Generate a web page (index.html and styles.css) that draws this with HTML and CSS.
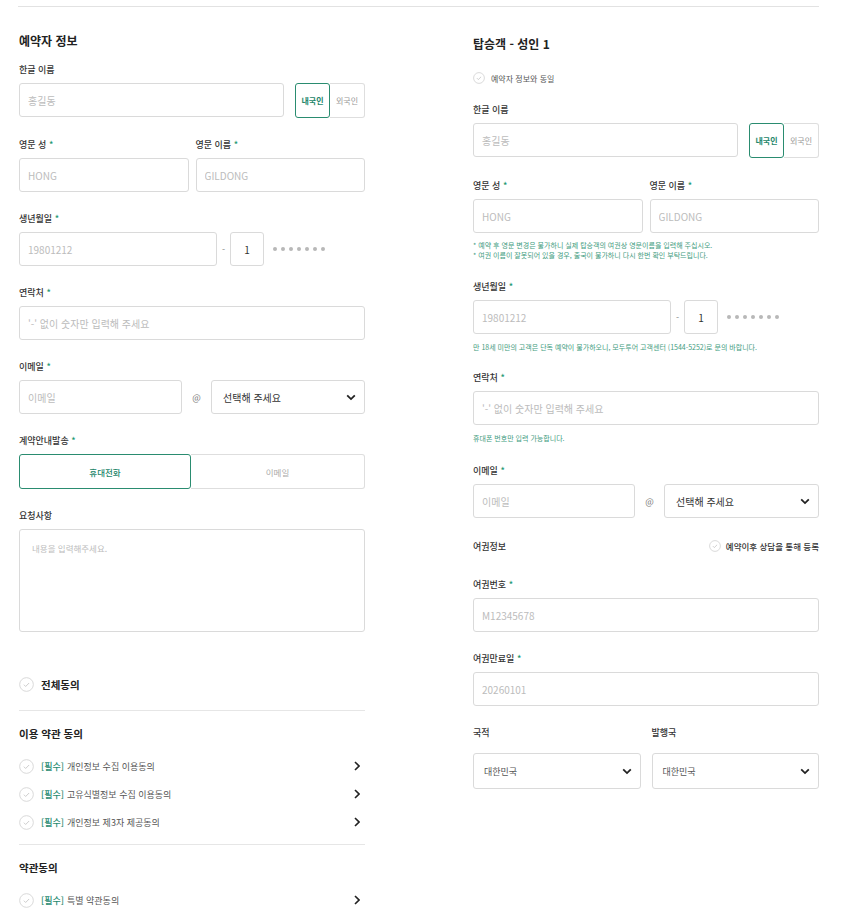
FILE: index.html
```html
<!DOCTYPE html>
<html lang="ko">
<head>
<meta charset="utf-8">
<title>예약 정보 입력</title>
<link rel="stylesheet" href="styles.css">
</head>
<body>
<div class="page">
  <section class="col col-left">
    <h2 class="sec-title">예약자 정보</h2>

    <div class="field">
      <label class="lbl">한글 이름</label>
      <div class="name-row">
        <input class="inp" placeholder="홍길동">
        <div class="nat-toggle">
          <button class="nat on">내국인</button>
          <button class="nat">외국인</button>
        </div>
      </div>
    </div>

    <div class="field two">
      <div>
        <label class="lbl">영문 성 <em>*</em></label>
        <input class="inp" placeholder="HONG">
      </div>
      <div>
        <label class="lbl">영문 이름 <em>*</em></label>
        <input class="inp" placeholder="GILDONG">
      </div>
    </div>

    <div class="field">
      <label class="lbl">생년월일 <em>*</em></label>
      <div class="birth-row">
        <input class="inp" placeholder="19801212">
        <span class="dash">-</span>
        <input class="inp inp-one" value="1">
        <span class="dots"><i></i><i></i><i></i><i></i><i></i><i></i><i></i></span>
      </div>
    </div>

    <div class="field">
      <label class="lbl">연락처 <em>*</em></label>
      <input class="inp" placeholder="'-' 없이 숫자만 입력해 주세요">
    </div>

    <div class="field">
      <label class="lbl">이메일 <em>*</em></label>
      <div class="email-row">
        <input class="inp" placeholder="이메일">
        <span class="at">@</span>
        <div class="sel"><span>선택해 주세요</span>
          <svg width="10" height="7" viewBox="0 0 10 7"><path d="M1.2 1.3L5 5.1l3.8-3.8" fill="none" stroke="#222" stroke-width="1.8"/></svg>
        </div>
      </div>
    </div>

    <div class="field">
      <label class="lbl">계약안내발송 <em>*</em></label>
      <div class="send-row">
        <button class="send on">휴대전화</button>
        <button class="send">이메일</button>
      </div>
    </div>

    <div class="field">
      <label class="lbl">요청사항</label>
      <textarea class="ta" placeholder="내용을 입력해주세요."></textarea>
    </div>

    <div class="all-agree">
      <svg class="chk" width="15" height="15" viewBox="0 0 16 16"><circle cx="8" cy="8" r="7.3" fill="#fff" stroke="#d6d6d6" stroke-width="1"/><path d="M5.2 8.2l1.9 1.9 3.7-3.7" fill="none" stroke="#c9c9c9" stroke-width="1"/></svg>
      <span>전체동의</span>
    </div>

    <div class="divider"></div>

    <h3 class="terms-title">이용 약관 동의</h3>
    <div class="term">
      <svg class="chk" width="15" height="15" viewBox="0 0 16 16"><circle cx="8" cy="8" r="7.3" fill="#fff" stroke="#d6d6d6" stroke-width="1"/><path d="M5.2 8.2l1.9 1.9 3.7-3.7" fill="none" stroke="#c9c9c9" stroke-width="1"/></svg>
      <span class="req">[필수]</span><span>개인정보 수집 이용동의</span>
      <svg class="chev" width="6" height="10" viewBox="0 0 6 10"><path d="M1 1l4 4-4 4" fill="none" stroke="#222" stroke-width="1.6"/></svg>
    </div>
    <div class="term">
      <svg class="chk" width="15" height="15" viewBox="0 0 16 16"><circle cx="8" cy="8" r="7.3" fill="#fff" stroke="#d6d6d6" stroke-width="1"/><path d="M5.2 8.2l1.9 1.9 3.7-3.7" fill="none" stroke="#c9c9c9" stroke-width="1"/></svg>
      <span class="req">[필수]</span><span>고유식별정보 수집 이용동의</span>
      <svg class="chev" width="6" height="10" viewBox="0 0 6 10"><path d="M1 1l4 4-4 4" fill="none" stroke="#222" stroke-width="1.6"/></svg>
    </div>
    <div class="term">
      <svg class="chk" width="15" height="15" viewBox="0 0 16 16"><circle cx="8" cy="8" r="7.3" fill="#fff" stroke="#d6d6d6" stroke-width="1"/><path d="M5.2 8.2l1.9 1.9 3.7-3.7" fill="none" stroke="#c9c9c9" stroke-width="1"/></svg>
      <span class="req">[필수]</span><span>개인정보 제3자 제공동의</span>
      <svg class="chev" width="6" height="10" viewBox="0 0 6 10"><path d="M1 1l4 4-4 4" fill="none" stroke="#222" stroke-width="1.6"/></svg>
    </div>

    <div class="divider divider-2"></div>

    <h3 class="terms-title">약관동의</h3>
    <div class="term">
      <svg class="chk" width="15" height="15" viewBox="0 0 16 16"><circle cx="8" cy="8" r="7.3" fill="#fff" stroke="#d6d6d6" stroke-width="1"/><path d="M5.2 8.2l1.9 1.9 3.7-3.7" fill="none" stroke="#c9c9c9" stroke-width="1"/></svg>
      <span class="req">[필수]</span><span>특별 약관동의</span>
      <svg class="chev" width="6" height="10" viewBox="0 0 6 10"><path d="M1 1l4 4-4 4" fill="none" stroke="#222" stroke-width="1.6"/></svg>
    </div>
  </section>

  <section class="col col-right">
    <h2 class="sec-title">탑승객 - 성인 1</h2>

    <div class="same">
      <svg class="chk" width="12" height="12" viewBox="0 0 16 16"><circle cx="8" cy="8" r="7.2" fill="#fff" stroke="#d6d6d6" stroke-width="1.2"/><path d="M5.2 8.2l1.9 1.9 3.7-3.7" fill="none" stroke="#c9c9c9" stroke-width="1.2"/></svg>
      <span>예약자 정보와 동일</span>
    </div>

    <div class="field f-name">
      <label class="lbl">한글 이름</label>
      <div class="name-row">
        <input class="inp" placeholder="홍길동">
        <div class="nat-toggle">
          <button class="nat on">내국인</button>
          <button class="nat">외국인</button>
        </div>
      </div>
    </div>

    <div class="field">
      <div class="two">
        <div>
          <label class="lbl">영문 성 <em>*</em></label>
          <input class="inp" placeholder="HONG">
        </div>
        <div>
          <label class="lbl">영문 이름 <em>*</em></label>
          <input class="inp" placeholder="GILDONG">
        </div>
      </div>
      <p class="note">* 예약 후 영문 변경은 불가하니 실제 탑승객의 여권상 영문이름을 입력해 주십시오.<br>* 여권 이름이 잘못되어 있을 경우, 출국이 불가하니 다시 한번 확인 부탁드립니다.</p>
    </div>

    <div class="field f-birth">
      <label class="lbl">생년월일 <em>*</em></label>
      <div class="birth-row">
        <input class="inp" placeholder="19801212">
        <span class="dash">-</span>
        <input class="inp inp-one" value="1">
        <span class="dots"><i></i><i></i><i></i><i></i><i></i><i></i><i></i></span>
      </div>
      <p class="note note-1">만 18세 미만의 고객은 단독 예약이 불가하오니, 모두투어 고객센터 (1544-5252)로 문의 바랍니다.</p>
    </div>

    <div class="field f-contact">
      <label class="lbl">연락처 <em>*</em></label>
      <input class="inp" placeholder="'-' 없이 숫자만 입력해 주세요">
      <p class="note note-1">휴대폰 번호만 입력 가능합니다.</p>
    </div>

    <div class="field">
      <label class="lbl">이메일 <em>*</em></label>
      <div class="email-row email-row-r">
        <input class="inp" placeholder="이메일">
        <span class="at">@</span>
        <div class="sel"><span>선택해 주세요</span>
          <svg width="10" height="7" viewBox="0 0 10 7"><path d="M1.2 1.3L5 5.1l3.8-3.8" fill="none" stroke="#222" stroke-width="1.8"/></svg>
        </div>
      </div>
    </div>

    <div class="passport">
      <span class="pp-title">여권정보</span>
      <span class="pp-later">
        <svg class="chk" width="12" height="12" viewBox="0 0 16 16"><circle cx="8" cy="8" r="7.2" fill="#fff" stroke="#d6d6d6" stroke-width="1.2"/><path d="M5.2 8.2l1.9 1.9 3.7-3.7" fill="none" stroke="#c9c9c9" stroke-width="1.2"/></svg>
        예약이후 상담을 통해 등록
      </span>
    </div>

    <div class="field">
      <label class="lbl">여권번호 <em>*</em></label>
      <input class="inp" placeholder="M12345678">
    </div>

    <div class="field">
      <label class="lbl">여권만료일 <em>*</em></label>
      <input class="inp" placeholder="20260101">
    </div>

    <div class="field nat-row">
      <div>
        <label class="lbl lbl-sel">국적</label>
        <div class="sel sel-tall"><span>대한민국</span>
          <svg width="10" height="7" viewBox="0 0 10 7"><path d="M1.2 1.3L5 5.1l3.8-3.8" fill="none" stroke="#222" stroke-width="1.8"/></svg>
        </div>
      </div>
      <div>
        <label class="lbl lbl-sel">발행국</label>
        <div class="sel sel-tall"><span>대한민국</span>
          <svg width="10" height="7" viewBox="0 0 10 7"><path d="M1.2 1.3L5 5.1l3.8-3.8" fill="none" stroke="#222" stroke-width="1.8"/></svg>
        </div>
      </div>
    </div>
  </section>
</div>
</body>
</html>
```

FILE: styles.css
```css
* { box-sizing: border-box; margin: 0; padding: 0; }

body {
  background: #fff;
  font-family: "Noto Sans CJK KR", "Noto Sans", sans-serif;
  color: #333;
}

.page {
  width: 801px;
  margin: 6px 0 0 18px;
  padding-left: 1px;
  border-top: 1px solid #e2e2e2;
  display: flex;
  gap: 108px;
  align-items: flex-start;
}

.col { width: 346px; flex: none; }

.sec-title {
  font-size: 12px;
  font-weight: 700;
  line-height: 16px;
  color: #222;
}
.col-left .sec-title { margin: 26px 0 14px; }
.col-right .sec-title { margin: 29px 0 19px; }

.lbl {
  display: block;
  font-size: 9px;
  font-weight: 500;
  line-height: 14px;
  margin-bottom: 6px;
  color: #333;
}
.lbl em { font-style: normal; color: #1f9a74; }
.lbl-sel { margin-bottom: 13px; }

.field { margin-bottom: 20px; }
.f-name { margin-bottom: 21px; }
.f-birth { margin-bottom: 19px; }
.f-contact { margin-bottom: 21px; }

.inp {
  display: block;
  width: 100%;
  height: 34px;
  border: 1px solid #dadada;
  border-radius: 3px;
  padding: 0 8px;
  font: inherit;
  font-size: 10px;
  color: #333;
  background: #fff;
  outline: none;
}
.inp::placeholder { color: #bcbcbc; }

.two {
  display: grid;
  grid-template-columns: 1fr 1fr;
  gap: 7px;
}

.name-row { display: flex; gap: 11px; align-items: flex-start; }
.name-row .inp { flex: 1; }
.nat-toggle { display: flex; flex: none; width: 70px; }
.nat {
  width: 35px;
  height: 35px;
  border: 1px solid #dedede;
  border-left: none;
  border-radius: 0 3px 3px 0;
  background: #fff;
  font: inherit;
  font-size: 8px;
  color: #999;
}
.nat.on {
  border: 1px solid #2a8c70;
  border-radius: 3px;
  color: #23866a;
  font-weight: 700;
}

.birth-row {
  display: flex;
  align-items: center;
}
.birth-row .inp { width: 198px; flex: none; }
.birth-row .inp-one { width: 34px; padding: 0; text-align: center; color: #333; }
.dash { width: 13px; text-align: center; font-size: 9px; color: #888; }
.dots { display: flex; gap: 4px; margin-left: 9px; }
.dots i { width: 4px; height: 4px; border-radius: 50%; background: #b8b8b8; }

.email-row {
  display: grid;
  grid-template-columns: 163px 29px 1fr;
  align-items: center;
}
.email-row-r { grid-template-columns: 162px 29px 1fr; }
.at { text-align: center; font-size: 9px; color: #777; }

.sel {
  height: 34px;
  border: 1px solid #dadada;
  border-radius: 3px;
  display: flex;
  align-items: center;
  justify-content: space-between;
  padding: 0 8px 0 11px;
  font-size: 10px;
  color: #333;
  background: #fff;
}
.sel-tall {
  height: 36px;
  font-size: 9px;
  color: #555;
  padding-left: 10px;
}

.send-row { display: grid; grid-template-columns: 172px 1fr; }
.send {
  height: 35px;
  border: 1px solid #dedede;
  border-left: none;
  border-radius: 0 3px 3px 0;
  background: #fff;
  font: inherit;
  font-size: 8.5px;
  color: #aaa;
}
.send.on {
  border: 1px solid #2a8c70;
  border-radius: 3px;
  color: #23866a;
  font-weight: 500;
}

.ta {
  display: block;
  width: 100%;
  height: 103px;
  border: 1px solid #dadada;
  border-radius: 3px;
  padding: 12px 12px;
  font: inherit;
  font-size: 8.5px;
  resize: none;
  outline: none;
}
.ta::placeholder { color: #bcbcbc; }

.chk { flex: none; display: block; }

.all-agree {
  margin-top: 42px;
  display: flex;
  align-items: center;
  gap: 7px;
  height: 20px;
  font-size: 10.5px;
  font-weight: 700;
  color: #222;
}

.divider { height: 1px; background: #e6e6e6; margin: 16px 0 15px; }
.divider-2 { margin: 12px 0 15px; }

.terms-title {
  font-size: 10.5px;
  font-weight: 600;
  line-height: 16px;
  color: #222;
  margin-bottom: 14px;
}

.term {
  display: flex;
  align-items: center;
  height: 20px;
  margin-bottom: 8px;
  font-size: 9px;
  color: #555;
}
.term .req { color: #1f8a70; font-weight: 500; margin: 0 3px 0 7px; }
.term .chev { margin-left: auto; margin-right: 5px; }

.same {
  display: flex;
  align-items: center;
  gap: 6px;
  height: 14px;
  font-size: 8px;
  color: #555;
  margin-bottom: 18px;
}

.note {
  font-size: 7px;
  line-height: 10px;
  color: #3f9c80;
  margin-top: 7px;
}
.note-1 { margin-top: 8px; }

.passport {
  display: flex;
  justify-content: space-between;
  align-items: center;
  height: 16px;
  margin: 20px 0 24px;
}
.pp-title { font-size: 9px; font-weight: 500; color: #333; }
.pp-later {
  display: flex;
  align-items: center;
  gap: 5px;
  font-size: 8.5px;
  font-weight: 500;
  color: #333;
}

.nat-row {
  display: grid;
  grid-template-columns: 1fr 1fr;
  gap: 11px;
}
```
